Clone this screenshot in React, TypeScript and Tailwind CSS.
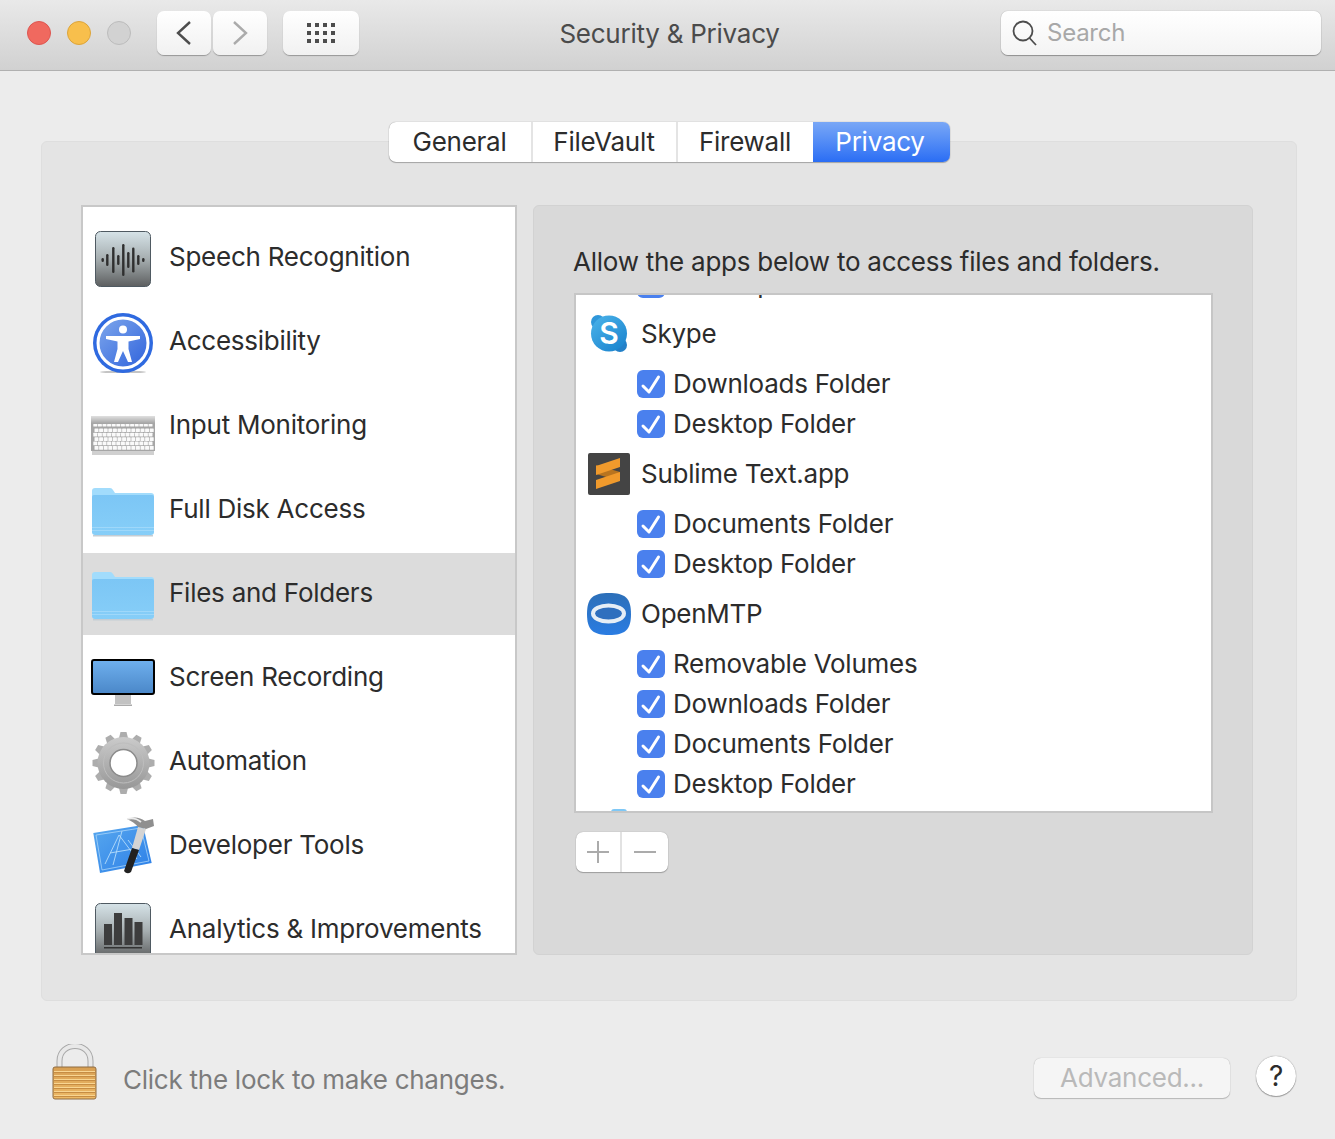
import React from 'react'

const panes = [
  'Speech Recognition',
  'Accessibility',
  'Input Monitoring',
  'Full Disk Access',
  'Files and Folders',
  'Screen Recording',
  'Automation',
  'Developer Tools',
  'Analytics & Improvements',
]

function BarsTile({ id, children }: { id: string; children: React.ReactNode }) {
  return (
    <>
      <defs>
        <linearGradient id={id} x1="0" y1="0" x2="0" y2="1">
          <stop offset="0" stopColor="#d6e3e8" />
          <stop offset="0.5" stopColor="#a6aeb0" />
          <stop offset="1" stopColor="#5d5f60" />
        </linearGradient>
      </defs>
      <rect x="4.5" y="6.5" width="55" height="55" rx="5" fill={`url(#${id})`} stroke="#4f5a62" />
      {children}
    </>
  )
}

function SpeechIcon() {
  const bars = [
    [11.7, 4],
    [16.3, 12],
    [22.3, 26],
    [27.3, 10],
    [32.3, 32],
    [37.3, 16],
    [42.3, 25],
    [47.3, 10],
    [52.3, 4],
  ]
  return (
    <svg width="64" height="64" viewBox="0 0 64 64">
      <BarsTile id="speechTile">
        {bars.map(([x, h]) => (
          <rect key={x} x={x - 1.2} y={35 - h / 2} width="2.4" height={h} rx="1.2" fill="#2f2f2f" />
        ))}
      </BarsTile>
    </svg>
  )
}

function AccessibilityIcon() {
  return (
    <svg width="64" height="64" viewBox="0 0 64 64">
      <defs>
        <linearGradient id="accessFill" x1="0" y1="0" x2="1" y2="1">
          <stop offset="0" stopColor="#7fa8ec" />
          <stop offset="1" stopColor="#2f62dc" />
        </linearGradient>
      </defs>
      <ellipse cx="32" cy="63" rx="23" ry="1.5" fill="#c4c4c4" />
      <circle cx="32" cy="34" r="30" fill="#2f6ae0" />
      <circle cx="32" cy="34" r="25" fill="url(#accessFill)" stroke="#fff" strokeWidth="3" />
      <circle cx="32" cy="20.5" r="4" fill="#fff" />
      <path d="M15 27 L49 27 L49 30 L37.5 32.5 L37.5 40 L41 53 L37 53 L32 42 L27 53 L23 53 L26.5 40 L26.5 32.5 L15 30 Z" fill="#fff" />
    </svg>
  )
}

function KeyboardIcon() {
  const rows = [0, 1, 2, 3, 4, 5]
  const cols = Array.from({ length: 13 }, (_, i) => i)
  return (
    <svg width="64" height="64" viewBox="0 0 64 64">
      <defs>
        <linearGradient id="keyTop" x1="0" y1="0" x2="0" y2="1">
          <stop offset="0" stopColor="#e0e0e0" />
          <stop offset="1" stopColor="#a8a8a8" />
        </linearGradient>
      </defs>
      <rect x="1" y="58" width="62" height="4" fill="#d0d0d0" />
      <rect x="0" y="23" width="64" height="35" fill="#a6a6a6" />
      <rect x="0" y="23" width="64" height="7" fill="url(#keyTop)" />
      {rows.map((r) =>
        cols.map((c) => (
          <rect key={`${r}-${c}`} x={2.3 + c * 4.6 + (r % 2) * 1.2} y={31 + r * 4.4} width="4" height={r === 0 ? 2.6 : 3.7} rx="0.5" fill="#fafafa" />
        )),
      )}
    </svg>
  )
}

function FolderIcon({ id }: { id: string }) {
  return (
    <svg width="64" height="64" viewBox="0 0 64 64">
      <defs>
        <linearGradient id={id} x1="0" y1="0" x2="0" y2="1">
          <stop offset="0" stopColor="#7cc6f5" />
          <stop offset="1" stopColor="#86cef8" />
        </linearGradient>
      </defs>
      <path d="M1 14 Q1 11 4 11 L19 11 Q21 11 22 13 L24 16 L60 16 Q63 16 63 19 L63 30 L1 30 Z" fill="#a2dcfc" />
      <path d="M1 20 Q1 18 3 18 L61 18 Q63 18 63 20 L63 55 Q63 58 60 58 L4 58 Q1 58 1 55 Z" fill={`url(#${id})`} />
      <rect x="1" y="50" width="62" height="1" fill="#9fd8fa" />
      <rect x="1" y="53" width="62" height="1" fill="#9fd8fa" />
      <rect x="2" y="58" width="60" height="1.5" fill="#c4cdd4" />
    </svg>
  )
}

function MonitorIcon() {
  return (
    <svg width="64" height="64" viewBox="0 0 64 64">
      <defs>
        <linearGradient id="screenFill" x1="0" y1="0" x2="0" y2="1">
          <stop offset="0" stopColor="#6fb0ee" />
          <stop offset="1" stopColor="#4a87c8" />
        </linearGradient>
      </defs>
      <rect x="24" y="49" width="16" height="10" fill="#c2c2c2" />
      <rect x="23" y="59.5" width="18" height="1.5" fill="#aaa" />
      <rect x="1" y="15" width="62" height="34" rx="2" fill="url(#screenFill)" stroke="#000" strokeWidth="2" />
    </svg>
  )
}

function GearIcon() {
  const teeth = Array.from({ length: 12 }, (_, i) => i * 30)
  return (
    <svg width="64" height="64" viewBox="0 0 64 64" className="overflow-visible">
      <defs>
        <linearGradient id="gearFill" x1="0" y1="0" x2="0" y2="1">
          <stop offset="0" stopColor="#cbcbcb" />
          <stop offset="1" stopColor="#979797" />
        </linearGradient>
      </defs>
      <g transform="translate(32.5 34)">
        {teeth.map((a) => (
          <path key={a} transform={`rotate(${a})`} d="M-4.5 -25 L-3 -31 L3 -31 L4.5 -25 Z" fill="#adadad" />
        ))}
        <circle r="26" fill="url(#gearFill)" />
        <circle r="20" fill="none" stroke="#bdbdbd" strokeWidth="1" />
        <circle r="13.5" fill="#fff" stroke="#8b8b8b" strokeWidth="1.5" />
      </g>
    </svg>
  )
}

function XcodeIcon() {
  return (
    <svg width="64" height="64" viewBox="0 0 64 64">
      <defs>
        <linearGradient id="xcodeFill" x1="0" y1="0" x2="1" y2="1">
          <stop offset="0" stopColor="#58a8ee" />
          <stop offset="1" stopColor="#2c7fe8" />
        </linearGradient>
      </defs>
      <path d="M2.3 20 L52 12 L60.7 50 L9 60 Z" fill="url(#xcodeFill)" />
      <path d="M5 22 L50 15 L58 48 L11 57 Z" fill="none" stroke="#b6dcfa" strokeWidth="0.7" />
      <path d="M14 51 L28 22 L46 46 M19 40 L42 36 M31 18 L22 52 M37 27 L50 44" fill="none" stroke="#b6dcfa" strokeWidth="0.9" />
      <path d="M36 6 Q46 2 54 8 L62 6 L63 13 L55 16 L47 14 Q43 9 36 6 Z" fill="#8f8f8f" />
      <path d="M36 6 Q44 4 50 9" fill="none" stroke="#ececec" strokeWidth="1.8" />
      <path d="M47 14 L55 16 L48 37 L41 35 Z" fill="#d4d4d4" />
      <path d="M41 35 L48 37 L40 59 Q36 62 33 58 Z" fill="#222" />
    </svg>
  )
}

function AnalyticsIcon() {
  return (
    <svg width="64" height="64" viewBox="0 0 64 64">
      <BarsTile id="analyticsTile">
        <rect x="13" y="27" width="8" height="21" fill="#3d3d3d" />
        <rect x="23" y="16" width="8" height="32" fill="#3d3d3d" />
        <rect x="33.5" y="21" width="8" height="27" fill="#3d3d3d" />
        <rect x="43.5" y="25" width="8" height="23" fill="#3d3d3d" />
        <rect x="13" y="50" width="38" height="1.5" fill="#333" />
      </BarsTile>
    </svg>
  )
}

function PaneIcon({ index }: { index: number }) {
  if (index === 0) return <SpeechIcon />
  if (index === 1) return <AccessibilityIcon />
  if (index === 2) return <KeyboardIcon />
  if (index === 3) return <FolderIcon id="folderA" />
  if (index === 4) return <FolderIcon id="folderB" />
  if (index === 5) return <MonitorIcon />
  if (index === 6) return <GearIcon />
  if (index === 7) return <XcodeIcon />
  return <AnalyticsIcon />
}

function SkypeIcon() {
  return (
    <div className="relative h-[44px] w-[44px]">
      <svg width="44" height="44" viewBox="0 0 44 44">
        <defs>
          <linearGradient id="skypeFill" x1="0" y1="0" x2="0.8" y2="1">
            <stop offset="0" stopColor="#4cb4ea" />
            <stop offset="1" stopColor="#1c85cf" />
          </linearGradient>
        </defs>
        <circle cx="11" cy="10" r="7" fill="#2f97da" />
        <circle cx="33" cy="33" r="7" fill="#2380c8" />
        <circle cx="22" cy="21.5" r="18" fill="url(#skypeFill)" />
      </svg>
      <span className="absolute inset-0 flex items-center justify-center pb-[2px] text-[30px] font-semibold text-white">S</span>
    </div>
  )
}

function SublimeIcon() {
  return (
    <svg width="44" height="44" viewBox="0 0 44 44">
      <rect x="1" y="1" width="42" height="42" rx="2" fill="#444" />
      <path d="M9 13 L33 20 L33 29 L9 22 Z" fill="#b8741f" />
      <path d="M33 6 L9 14 L9 23 L33 15 Z" fill="#f09a2c" />
      <path d="M33 20 L9 28 L9 37 L33 29 Z" fill="#f09a2c" />
    </svg>
  )
}

function OpenMtpIcon() {
  return (
    <svg width="44" height="44" viewBox="0 0 44 44">
      <defs>
        <linearGradient id="mtpFill" x1="0" y1="0" x2="0" y2="1">
          <stop offset="0" stopColor="#2c6fb8" />
          <stop offset="1" stopColor="#2a7ce2" />
        </linearGradient>
      </defs>
      <path d="M22 1 C38 1 44 6 44 22 C44 38 38 43 22 43 C6 43 0 38 0 22 C0 6 6 1 22 1 Z" fill="url(#mtpFill)" />
      <ellipse cx="21.5" cy="21.5" rx="15.5" ry="8" fill="#2f6fbe" stroke="#e6eef6" strokeWidth="4" />
    </svg>
  )
}

function Check() {
  return (
    <span className="flex h-[28px] w-[28px] items-center justify-center rounded-[6px] bg-[#4a80ee]">
      <svg width="28" height="28" viewBox="0 0 28 28">
        <path d="M6 16 L12 22 L21.5 7" fill="none" stroke="#fff" strokeWidth="3" strokeLinecap="round" strokeLinejoin="round" />
      </svg>
    </span>
  )
}

function FolderRow({ label }: { label: string }) {
  return (
    <div className="flex h-[40px] items-center gap-[8px] pl-[61px]">
      <Check />
      <span className="pb-[2px]">{label}</span>
    </div>
  )
}

function AppRow({ label, icon }: { label: string; icon: React.ReactNode }) {
  return (
    <div className="flex h-[60px] items-center gap-[10px] pl-[11px]">
      {icon}
      <span className="pb-[2px]">{label}</span>
    </div>
  )
}

export default function App() {
  return (
    <div className="h-[1139px] w-[1335px] overflow-hidden bg-[#ececec] font-['Inter',sans-serif] text-[26px] tracking-[-0.25px] text-[#2c2c2c]">
      {/* Title bar */}
      <div className="flex h-[71px] items-center border-b border-[#b0b0b0] bg-gradient-to-b from-[#e9e9e9] to-[#d1d1d1] pb-[4px] pl-[27px] pr-[14px]">
        <div className="flex items-center gap-[16px]">
          <span className="h-[24px] w-[24px] rounded-full border border-[#de5550] bg-[#f0695f]" />
          <span className="h-[24px] w-[24px] rounded-full border border-[#dca43a] bg-[#f8bf4c]" />
          <span className="h-[24px] w-[24px] rounded-full border border-[#bcbcbc] bg-[#d2d2d2]" />
        </div>
        <div className="ml-[26px] flex gap-[2px]">
          <div className="flex h-[44px] w-[54px] items-center justify-center rounded-[7px] bg-gradient-to-b from-white to-[#f1f1f1] shadow-[0_1px_1px_rgba(0,0,0,0.3)]">
            <svg width="18" height="26" viewBox="0 0 18 26">
              <path d="M15 2 L3 13 L15 24" fill="none" stroke="#4d4d4d" strokeWidth="2.4" />
            </svg>
          </div>
          <div className="flex h-[44px] w-[54px] items-center justify-center rounded-[7px] bg-gradient-to-b from-white to-[#f1f1f1] shadow-[0_1px_1px_rgba(0,0,0,0.3)]">
            <svg width="18" height="26" viewBox="0 0 18 26">
              <path d="M3 2 L15 13 L3 24" fill="none" stroke="#ababab" strokeWidth="2.4" />
            </svg>
          </div>
        </div>
        <div className="ml-[16px] flex h-[44px] w-[76px] items-center justify-center rounded-[7px] bg-gradient-to-b from-white to-[#f1f1f1] shadow-[0_1px_1px_rgba(0,0,0,0.3)]">
          <div className="grid grid-cols-4 gap-[4px]">
            {Array.from({ length: 12 }, (_, i) => (
              <span key={i} className="h-[4px] w-[4px] bg-[#4d4d4d]" />
            ))}
          </div>
        </div>
        <div className="flex-1 pr-[21px] text-center text-[#4b4b4b]">Security &amp; Privacy</div>
        <div className="flex h-[44px] w-[320px] items-center gap-[9px] rounded-[7px] bg-gradient-to-b from-white to-[#f4f4f4] pl-[11px] shadow-[0_0_1px_rgba(0,0,0,0.4),0_1px_1px_rgba(0,0,0,0.3)]">
          <svg width="26" height="26" viewBox="0 0 26 26">
            <circle cx="11" cy="11" r="9.5" fill="none" stroke="#4d4d4d" strokeWidth="1.8" />
            <path d="M17.5 18 L24 25" stroke="#4d4d4d" strokeWidth="1.8" />
          </svg>
          <span className="text-[24px] text-[#a8a8a8]">Search</span>
        </div>
      </div>

      {/* Main panel */}
      <div className="ml-[41px] mt-[70px] h-[860px] w-[1256px] rounded-[6px] border border-[#dedede] bg-[#e4e4e4] px-[39px]">
        <div className="-mt-[20px] flex justify-center">
          <div className="flex h-[40px] w-[561px] overflow-hidden rounded-[7px] bg-white shadow-[0_0_1px_rgba(0,0,0,0.45),0_1px_1px_rgba(0,0,0,0.25)]">
            <div className="flex w-[144px] items-center justify-center border-r-2 border-[#e4e4e4] pb-[2px]">General</div>
            <div className="flex w-[145px] items-center justify-center border-r-2 border-[#e4e4e4] pb-[2px]">FileVault</div>
            <div className="flex w-[135px] items-center justify-center pb-[2px]">Firewall</div>
            <div className="flex w-[137px] items-center justify-center bg-gradient-to-b from-[#79a7f6] to-[#2a6df4] pb-[2px] pr-[2px] text-white">Privacy</div>
          </div>
        </div>

        <div className="mt-[43px] flex gap-[16px]">
          {/* Pane list */}
          <div className="h-[750px] w-[436px] overflow-hidden border-2 border-[#c8c8c8] bg-white pt-[8px]">
            {panes.map((name, i) => (
              <div
                key={name}
                className={`flex items-center gap-[14px] pl-[8px] ${i === 4 ? 'mt-[2px] h-[82px] bg-[#dcdcdc] pb-[2px]' : 'h-[84px]'}`}
              >
                <div className="h-[64px] w-[64px] shrink-0">
                  <PaneIcon index={i} />
                </div>
                <span className="pb-[2px]">{name}</span>
              </div>
            ))}
          </div>

          {/* Files and folders detail */}
          <div className="h-[750px] w-[720px] rounded-[6px] border border-[#d2d2d2] bg-[#d9d9d9] pl-[40px]">
            <p className="-ml-[1px] mt-[36px] h-[50px]">Allow the apps below to access files and folders.</p>
            <div className="mt-[1px] h-[520px] w-[639px] overflow-hidden border-2 border-[#c6c6c6] bg-white">
              <div className="-mt-[31px]">
                <FolderRow label="Desktop Folder" />
                <AppRow label="Skype" icon={<SkypeIcon />} />
                <FolderRow label="Downloads Folder" />
                <FolderRow label="Desktop Folder" />
                <AppRow label="Sublime Text.app" icon={<SublimeIcon />} />
                <FolderRow label="Documents Folder" />
                <FolderRow label="Desktop Folder" />
                <AppRow label="OpenMTP" icon={<OpenMtpIcon />} />
                <FolderRow label="Removable Volumes" />
                <FolderRow label="Downloads Folder" />
                <FolderRow label="Documents Folder" />
                <FolderRow label="Desktop Folder" />
                <div className="ml-[35px] mt-[5px] h-[6px] w-[16px] rounded-t-[3px] bg-[#7fc8f6]" />
              </div>
            </div>
            <div className="ml-[2px] mt-[19px] flex h-[40px] w-[92px] rounded-[7px] bg-white shadow-[0_0_1px_rgba(0,0,0,0.35),0_1px_1px_rgba(0,0,0,0.25)]">
              <div className="flex w-[46px] items-center justify-center border-r-2 border-[#e2e2e2]">
                <svg width="24" height="24" viewBox="0 0 24 24">
                  <path d="M1 12 H23 M12 1 V23" stroke="#ababab" strokeWidth="2" />
                </svg>
              </div>
              <div className="flex flex-1 items-center justify-center">
                <svg width="24" height="24" viewBox="0 0 24 24">
                  <path d="M1 12 H23" stroke="#ababab" strokeWidth="2" />
                </svg>
              </div>
            </div>
          </div>
        </div>
      </div>

      {/* Footer */}
      <div className="relative flex items-start pl-[52px] pr-[39px] pt-[43px]">
        <svg width="46" height="56" viewBox="0 0 46 56">
          <defs>
            <linearGradient id="lockBody" x1="0" y1="0" x2="0" y2="1">
              <stop offset="0" stopColor="#d79f53" />
              <stop offset="1" stopColor="#eeb966" />
            </linearGradient>
          </defs>
          <path d="M7.5 24 V17 C7.5 -3 38.5 -3 38.5 17 V24" fill="none" stroke="#a8a8a8" strokeWidth="6" />
          <path d="M7.5 24 V17 C7.5 -3 38.5 -3 38.5 17 V24" fill="none" stroke="#e8e8e8" strokeWidth="4" />
          <rect x="1" y="23" width="43" height="32" rx="2" fill="url(#lockBody)" stroke="#8f6c42" strokeWidth="1" />
          {[27, 31, 35, 39, 43, 47, 51].map((y) => (
            <React.Fragment key={y}>
              <rect x="2" y={y} width="41" height="1" fill="#f8d592" />
              <rect x="2" y={y + 1} width="41" height="1" fill="#c68c43" />
            </React.Fragment>
          ))}
        </svg>
        <span className="ml-[25px] mt-[16px] text-[#7c7c7c]">Click the lock to make changes.</span>
        <div className="ml-auto mt-[14px] flex h-[40px] w-[196px] items-center justify-center rounded-[7px] bg-[#f5f5f5] pb-[2px] text-[#b9b9b9] shadow-[0_0_1px_rgba(0,0,0,0.3),0_1px_1px_rgba(0,0,0,0.2)]">Advanced...</div>
        <div className="ml-[26px] mt-[12px] flex h-[40px] w-[40px] items-center justify-center rounded-full bg-white text-[28px] shadow-[0_0_1px_rgba(0,0,0,0.5),0_1px_1px_rgba(0,0,0,0.3)]">?</div>
      </div>
    </div>
  )
}
